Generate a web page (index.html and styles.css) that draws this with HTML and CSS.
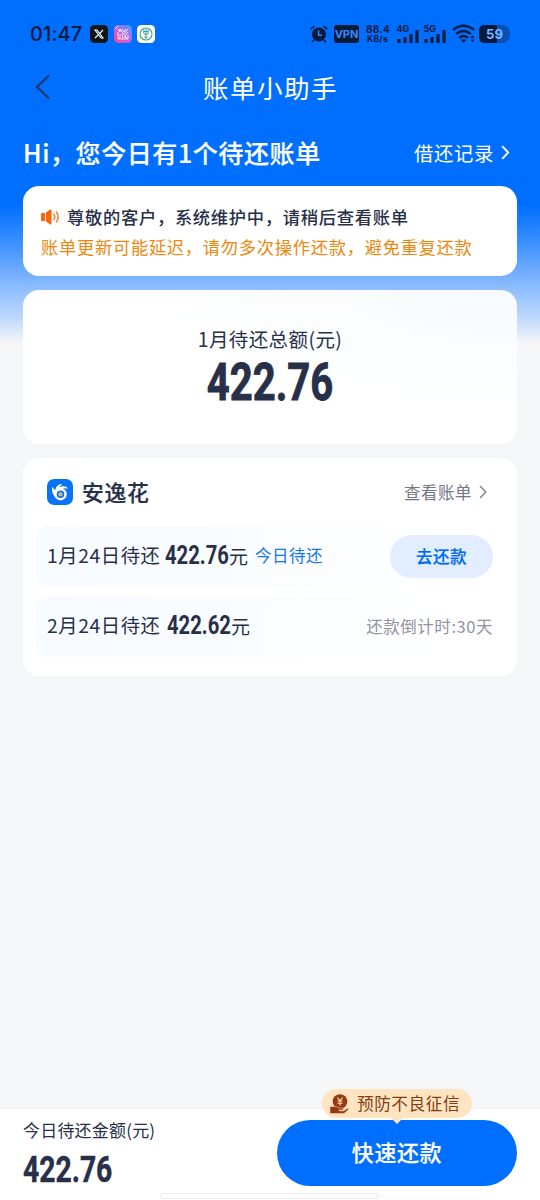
FILE: index.html
```html
<!DOCTYPE html>
<html lang="zh-CN">
<head>
<meta charset="utf-8">
<meta name="viewport" content="width=device-width, initial-scale=1">
<title>账单小助手</title>
<link rel="stylesheet" href="styles.css">
</head>
<body>
<div class="screen">
  <div class="status">
    <span class="clock">01:47</span>
    <svg class="app" viewBox="0 0 18 18"><rect width="18" height="18" rx="4.5" fill="#10151c"/><path d="M5 5h2l6 8h-2zM13 5l-3.3 3.5M8.2 9.8L5 13" fill="none" stroke="#fff" stroke-width="1.1"/></svg>
    <svg class="app" viewBox="0 0 18 18"><defs><linearGradient id="g" x1="1" y1="0" x2="0.1" y2="1"><stop offset="0" stop-color="#35a0ff"/><stop offset=".5" stop-color="#b66be8"/><stop offset="1" stop-color="#ff3f8c"/></linearGradient></defs><rect width="18" height="18" rx="4.5" fill="url(#g)"/><path d="M4 4l2 3V4l4 6M4 7v7M6 9v5M8 9l1 5M10 11l2 3M14 4l-4 5M14 7l-3 4 3 3M4 14h10M8 4l2 3 2-3M14 10v4M1 4l3-3" fill="none" stroke="#fff" stroke-width=".8"/></svg>
    <svg class="app" viewBox="0 0 18 18"><rect width="18" height="18" rx="4.5" fill="#fff"/><circle cx="9" cy="9" r="6" fill="none" stroke="#3aa592" stroke-width="1.1"/><path d="M9 4v10M6.800 4.500V8q0 1.500 2.200 1.500T11.200 8V4.500M7 6.500h4M7.300 12h3.400" fill="none" stroke="#3aa592" stroke-width="1"/></svg>
    <div class="system">
      <svg class="alarm" viewBox="0 0 18 18"><circle cx="9" cy="9.500" r="7" fill="#061a3a"/><path d="M.8 4.200L4.300 1.200M17.200 4.200l-3.500-3M4 15l-2 2.300M14 15l2 2.300" stroke="#061a3a" stroke-width="1.600"/><path d="M8.600 5.500v4.700h3.400" fill="none" stroke="#2b86ff" stroke-width="1.500"/></svg>
      <span class="vpn">VPN</span>
      <span class="speed"><span>88.4</span><span class="unit">KB/s</span></span>
      <svg class="signal" viewBox="0 0 22 20"><text x="-.5" y="8" class="net">4G</text><path d="M2 15v4M8 13v6M14 10v9M20 6v13" stroke="#061a3a" stroke-width="3.200"/></svg>
      <svg class="signal s5" viewBox="0 0 22 20"><text x="-.5" y="8" class="net">5G</text><path d="M2 15v4M8 13v6M14 10v9M20 6v13" stroke="#061a3a" stroke-width="3.200"/></svg>
      <svg class="wifi" viewBox="0 0 23 20"><path d="M1 6Q11.500-2.500 22 6M4 10Q11.500 4 19 10M7 14q4.500-4 9 0" fill="none" stroke="#061a3a" stroke-width="2.200"/><path d="M8.500 15.500h6l-3 3.300zM18.500 14l2-2.800 2 2.800zM18.500 15.500h4l-2 2.800z" fill="#061a3a"/></svg>
      <span class="battery">59</span>
    </div>
  </div>

  <header class="nav">
    <svg class="back" viewBox="0 0 16 28"><path d="M14 2.500L2 14l12 11.500" fill="none" stroke="#1d3764" stroke-width="2.200"/></svg>
    <h1>账单小助手</h1>
  </header>

  <div class="greet">
    <h2>Hi，您今日有1个待还账单</h2>
    <a class="records">借还记录<svg viewBox="0 0 9 15"><path d="M1.200 1.200l6 6.300-6 6.300" fill="none" stroke="#fff" stroke-width="1.900"/></svg></a>
  </div>

  <main>
    <section class="card notice">
      <div class="notice-title"><svg viewBox="0 0 19 16"><path d="M1 4h3v8H1q-1 0-1-1V5q0-1 1-1zM5 3.500L9.300.6q1.200-.7 1.200.8v13.200q0 1.500-1.200.8L5 12.500z" fill="#fa640a"/><path d="M12.600 5q2.400 3 0 6M15 2.500q4.400 5.500 0 11" fill="none" stroke="#fa7c2d" stroke-width="1.500"/></svg><span>尊敬的客户，系统维护中，请稍后查看账单</span></div>
      <p>账单更新可能延迟，请勿多次操作还款，避免重复还款</p>
    </section>

    <section class="card total">
      <div class="total-label">1月待还总额(元)</div>
      <div class="total-value">422.76</div>
    </section>

    <section class="card bills">
      <div class="bill-head">
        <svg class="brand" viewBox="0 0 26 26"><rect width="26" height="26" rx="7" fill="#0873f8"/><path d="M8.800 18.500Q4 14 5.300 7.700q1.200 2.600 3.200 3.300-.1-3.500 4.200-5.700 2.200-.5 2.700.5-2.500.8-3.500 2.600 3.500-2 7.300-.7 1.700.8 1.500 2-3-.9-5.200.3L9.500 13z" fill="#fff"/><circle cx="13.500" cy="15.200" r="5" fill="#0873f8" stroke="#fff" stroke-width="2.500"/><circle cx="13.500" cy="15.200" r="2" fill="#f6d35c"/><circle cx="13.500" cy="15.200" r=".8" fill="#2686ce"/></svg>
        <h3>安逸花</h3>
        <a class="view">查看账单<svg viewBox="0 0 8 14"><path d="M1 1l5.800 6L1 13" fill="none" stroke="#858795" stroke-width="1.500"/></svg></a>
      </div>
      <div class="bill">
        <span class="date">1月24日待还</span><b class="amount">422.76</b><span class="yuan">元</span><span class="today">今日待还</span>
        <button class="pay">去还款</button>
      </div>
      <div class="bill">
        <span class="date second">2月24日待还</span><b class="amount">422.62</b><span class="yuan">元</span>
        <span class="countdown">还款倒计时:30天</span>
      </div>
    </section>
  </main>

  <footer>
    <div class="due">
      <div class="due-label">今日待还金额(元)</div>
      <div class="due-value">422.76</div>
    </div>
    <button class="quick">快速还款</button>
    <div class="tip">
      <svg viewBox="0 0 19 20"><circle cx="10" cy="7.500" r="7.300" fill="#963912"/><path d="M7.300 3.500L10 6.700l2.700-3.200M10 6.500v5M7.500 7h5M7.500 9.300h5" fill="none" stroke="#ffe0b5" stroke-width="1.100"/><path d="M0 12.500h3q4-.6 6 1.500h4q1 1-.2 2H9v.8h5l3.200-2.300q1.800-.5 1.500 1L14 19.500H0z" fill="#963912" stroke="#ffe4c2" stroke-width=".5"/></svg>
      <span>预防不良征信</span>
    </div>
    <div class="home-bar"></div>
  </footer>
</div>
</body>
</html>
```

FILE: styles.css
```css
* { box-sizing: border-box; }
body { margin: 0; font-family: "Noto Sans CJK SC", sans-serif; color: #283049; }
h1, h2, h3, p { margin: 0; font-weight: 400; }
button { border: 0; padding: 0; font-family: inherit; }
svg { display: block; flex: none; }

.screen {
  width: 540px; height: 1200px; overflow: hidden;
  display: flex; flex-direction: column;
  white-space: nowrap;
  background: linear-gradient(#006fff 0, #006fff 205px, #3c90ff 243px, #8cbcff 287px, #bed9fc 318px, #f5f6f8 343px);
}

/* Status bar */
.status { height: 54px; padding: 13px 30px 0; display: flex; align-items: center; color: #061a3a; }
.clock { width: 60px; font: 500 20px Inter, sans-serif; letter-spacing: .1px; }
.app { width: 18px; height: 18px; margin-right: 5.500px; }
.system { margin-left: auto; display: flex; align-items: center; }
.alarm { width: 18px; height: 18px; margin-right: 6px; }
.vpn { width: 25px; height: 18px; border-radius: 3px; background: #061a3a; color: #348bfb; font: 700 11px/18px Inter, sans-serif; text-align: center; margin-right: 7px; }
.speed { width: 31px; display: flex; flex-direction: column; font: 700 10px/11px Inter, sans-serif; letter-spacing: .25px; }
.unit { font-size: 8.500px; line-height: 9px; letter-spacing: .3px; padding-left: 1px; }
.signal { width: 22px; height: 20px; overflow: visible; margin-right: 5px; }
.s5 { margin-right: 6px; }
.net { font: 700 9px Inter, sans-serif; fill: #061a3a; }
.wifi { width: 23px; height: 20px; margin-right: 4px; }
.battery { width: 31px; height: 18px; border-radius: 5px 8px 8px 5px; background: linear-gradient(90deg, #061a3a 57%, #0750b5 57%); color: #7cb4ff; font: 700 13px/18px Inter, sans-serif; text-align: center; }

/* Page title */
.nav { height: 70px; display: flex; align-items: center; justify-content: center; position: relative; }
.back { position: absolute; left: 35px; top: 19px; width: 16px; height: 28px; }
.nav h1 { color: #fff; font-size: 25.500px; line-height: 38px; letter-spacing: 1.500px; padding: 0 0 4px 1px; }

.greet { height: 62px; padding: 0 30px 5px 23px; display: flex; align-items: center; justify-content: space-between; color: #fff; }
.greet h2 { font-size: 25px; font-weight: 500; letter-spacing: .6px; padding-bottom: 1px; -webkit-text-stroke: .2px #fff; }
.records { display: flex; align-items: center; font-size: 19.300px; letter-spacing: .7px; }
.records svg { width: 9px; height: 15px; margin-left: 7px; }

/* Cards */
main { flex: 1; padding: 0 23px; display: flex; flex-direction: column; gap: 14px; }
.card { background: #fff; border-radius: 16px; }
.notice { height: 90px; padding: 16px 18px 0; }
.notice-title { display: flex; align-items: center; height: 30px; font-size: 17.300px; font-weight: 500; letter-spacing: .7px; }
.notice-title span { padding-bottom: 2px; }
.notice-title svg { width: 19px; height: 16px; margin-right: 7px; }
.notice p { color: #ed870d; font-size: 17.300px; line-height: 30px; letter-spacing: .7px; }

.total { height: 154px; padding-top: 34px; text-align: center; background: radial-gradient(ellipse at 100% 0, #f6faff 0, #fff 55%); }
.total-label { font-size: 19.500px; line-height: 30px; letter-spacing: .4px; }
.total-value { font: 700 52px/58px Roboto, sans-serif; transform: scaleX(.77); -webkit-text-stroke: .9px #283049; }

.bills { height: 218px; padding: 14px 13px 0; display: flex; flex-direction: column; }
.bill-head { height: 40px; margin-bottom: 14px; padding: 0 17px 0 11px; display: flex; align-items: center; }
.brand { width: 26px; height: 26px; margin-right: 9px; }
.bill-head h3 { font-size: 21.800px; font-weight: 500; letter-spacing: .7px; padding-bottom: 2px; -webkit-text-stroke: .2px #283049; }
.view { margin-left: auto; display: flex; align-items: center; color: #747685; font-size: 16.500px; letter-spacing: .5px; }
.view svg { width: 8px; height: 14px; margin-left: 7px; }
.bill { height: 61px; margin-bottom: 9px; padding: 0 11px; border-radius: 11px; display: flex; align-items: center; background: linear-gradient(90deg, #f7fafe, #f9fcff 40%, #fff 90%); }
.bill > span { padding-bottom: 3px; }
.date { width: 118px; font-size: 19.300px; letter-spacing: .6px; }
.second { width: 120px; }
.amount { width: 64px; font: 700 25px/30px Roboto, sans-serif; padding-bottom: 2px; transform: scaleX(.81); transform-origin: left; }
.yuan { font-size: 19px; }
.today { margin-left: 7px; color: #1577ee; font-size: 16.500px; letter-spacing: .5px; }
.pay { width: 103px; height: 43px; margin-left: auto; padding-bottom: 1px; border-radius: 22px; background: #e2eeff; color: #006bf2; font-size: 16.500px; font-weight: 500; letter-spacing: .5px; -webkit-text-stroke: .2px #006bf2; }
.bill > .countdown { margin-left: auto; padding-bottom: 1px; color: #92949d; font-size: 16.500px; letter-spacing: .55px; }

/* Bottom bar */
footer { height: 92px; position: relative; display: flex; justify-content: space-between; padding: 12px 23px 0; background: #fff; border-top: 1px solid #f0f1f3; }
.due-label { font-size: 17px; line-height: 20px; letter-spacing: .2px; margin-top: -1px; }
.due-value { font: 700 36.500px/42px Roboto, sans-serif; margin-top: 9px; transform: scaleX(.775); transform-origin: left; -webkit-text-stroke: .5px #283049; }
.quick { width: 240px; height: 66px; margin-top: -1px; padding-bottom: 4px; border-radius: 33px; background: #006fff; color: #fff; font-size: 22px; font-weight: 500; letter-spacing: .6px; -webkit-text-stroke: .2px #fff; }
.tip { position: absolute; left: 322px; top: -20px; width: 150px; height: 29px; border-radius: 15px; background: #ffe4c2; color: #813d13; display: flex; align-items: center; padding-left: 8px; font-size: 16.700px; letter-spacing: .5px; }
.tip::after { content: ""; position: absolute; left: 69px; bottom: -6px; border: solid transparent; border-width: 6px 6px 0; border-top-color: #ffe4c2; }
.tip span { padding-bottom: 2px; }
.tip svg { width: 19px; height: 20px; margin-right: 8px; }
.home-bar { position: absolute; left: 160px; bottom: 1px; width: 219px; height: 6px; border: 1px solid #ececee; border-radius: 3px; background: #fdfdfd; }
```
